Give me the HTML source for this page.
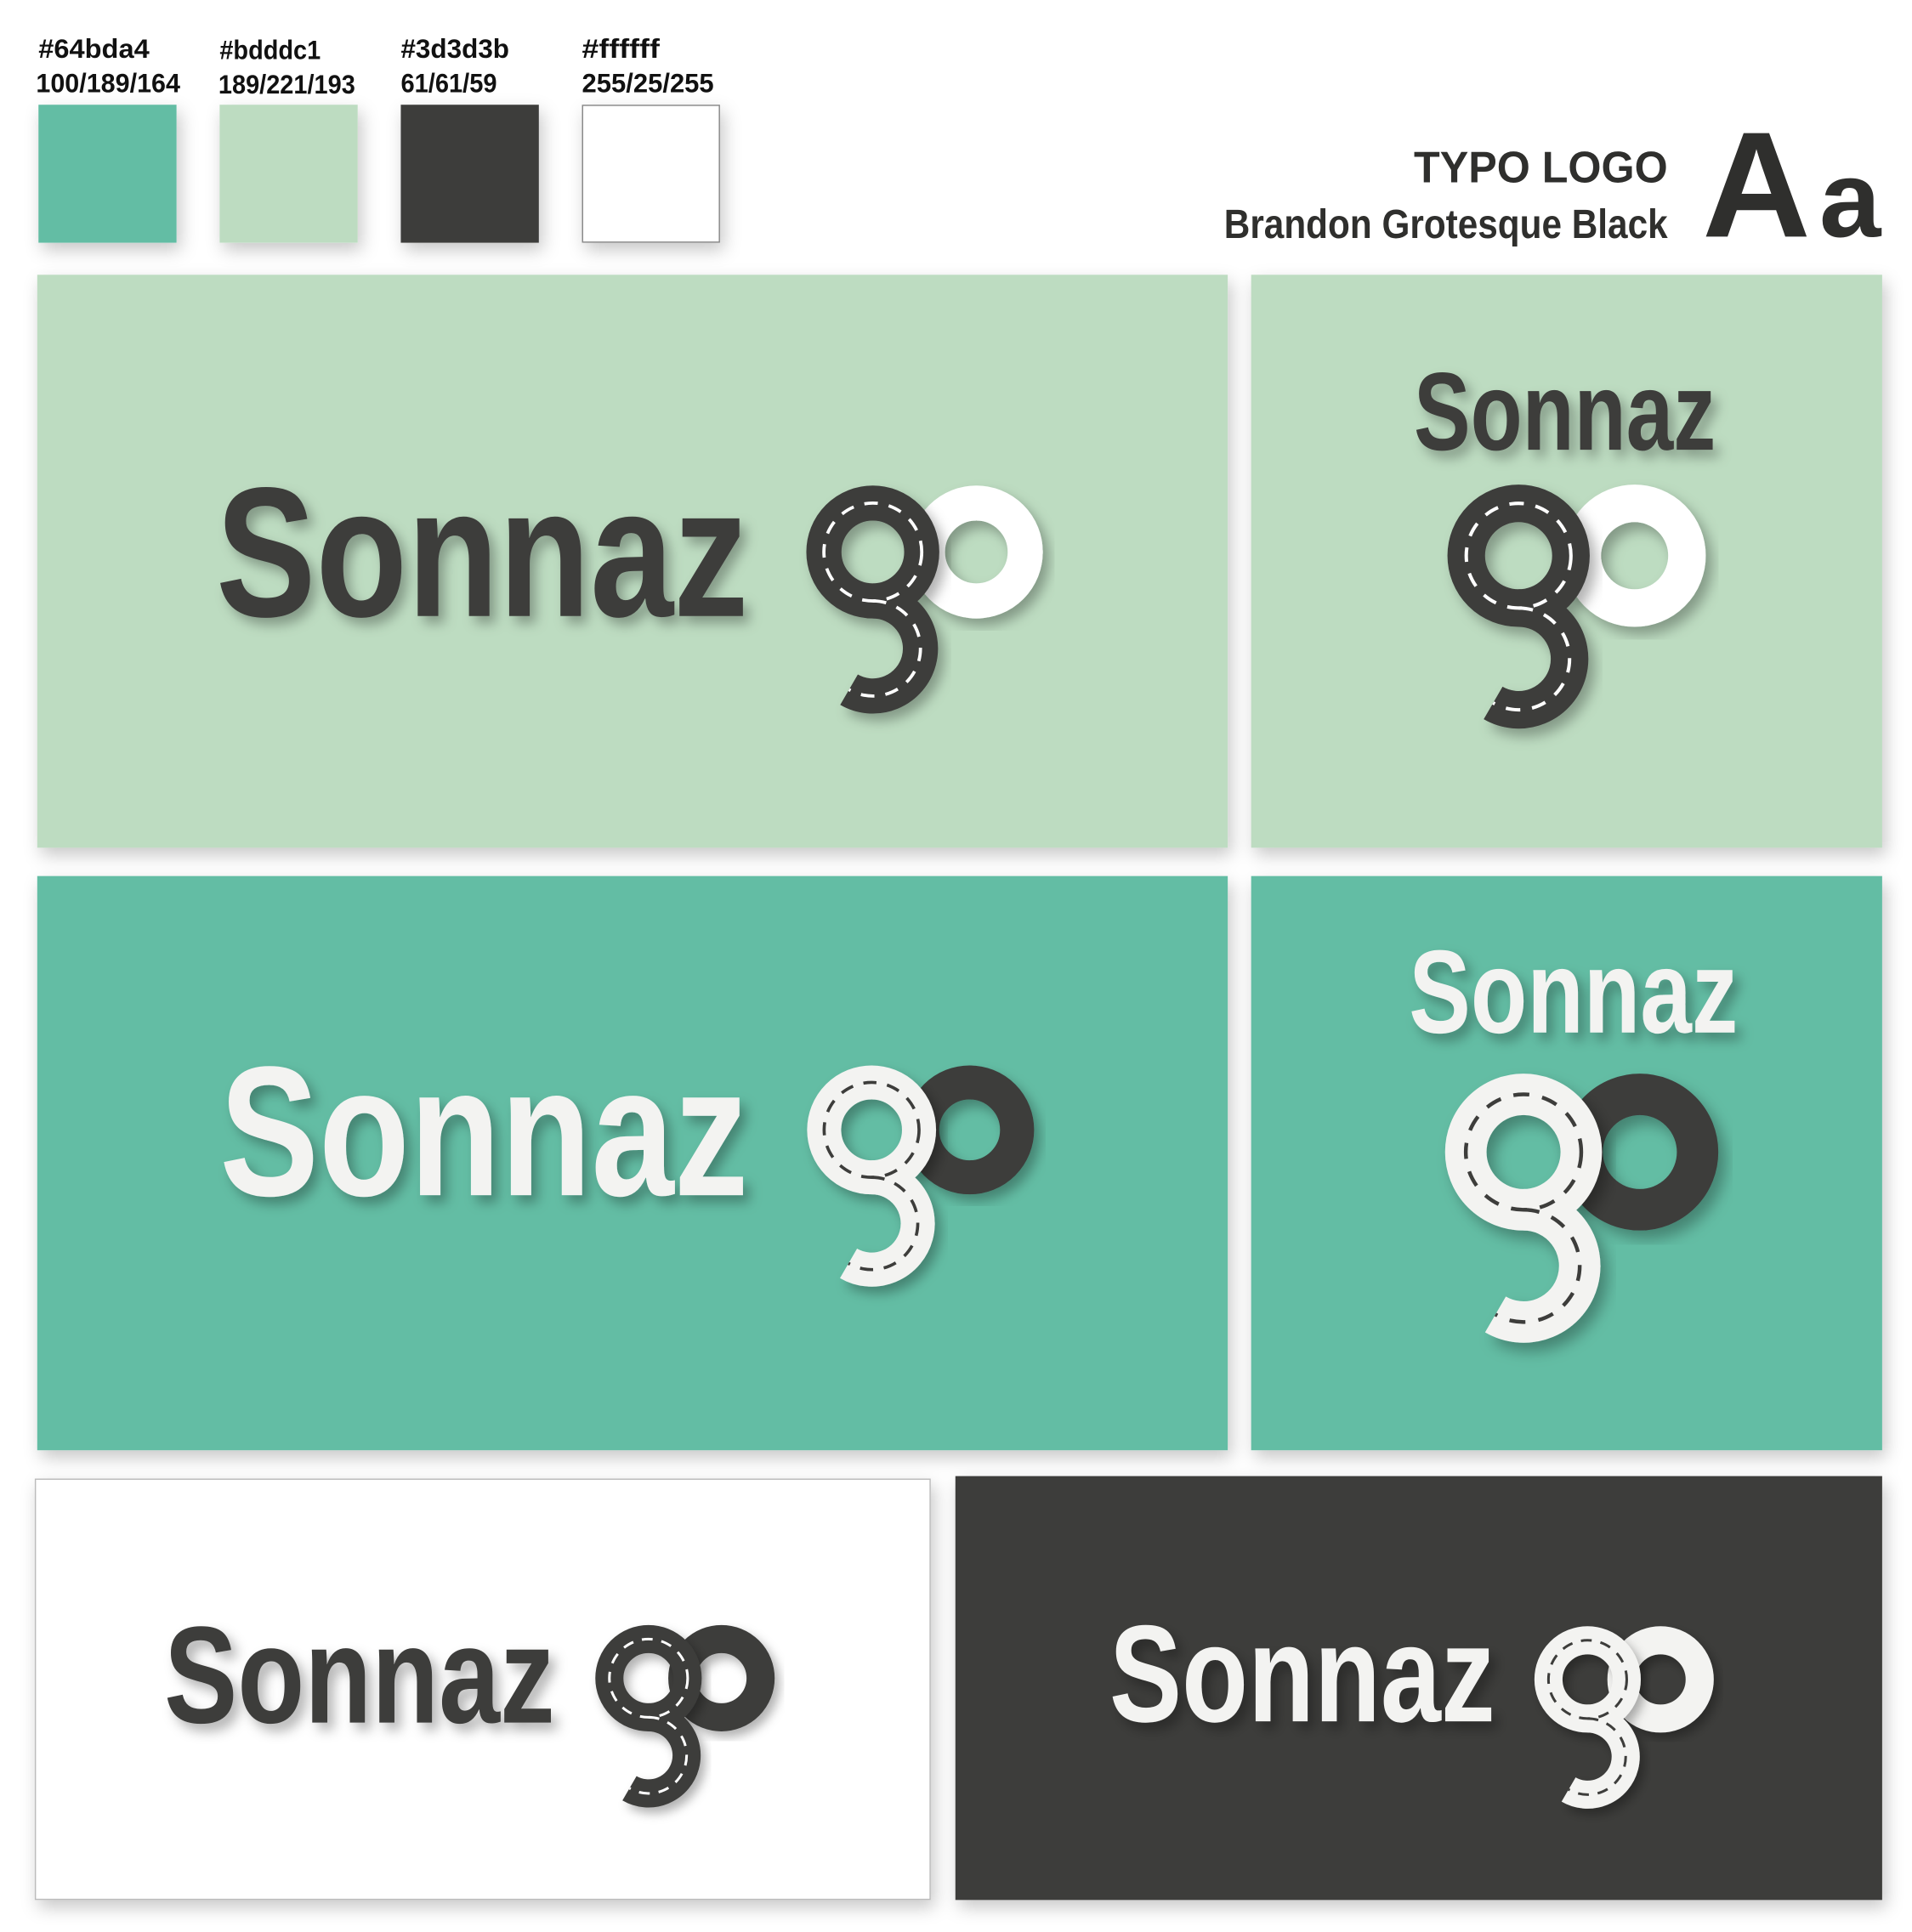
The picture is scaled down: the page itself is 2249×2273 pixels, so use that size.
<!DOCTYPE html>
<html><head><meta charset="utf-8"><style>
html,body{margin:0;padding:0;background:#fff;}
svg{display:block}
text{font-family:"Liberation Sans",sans-serif;font-weight:bold}
</style></head><body>
<svg width="2249" height="2273" viewBox="0 0 1551 1568" xmlns="http://www.w3.org/2000/svg">
<defs>
<filter id="ps" x="-10%" y="-10%" width="130%" height="130%"><feDropShadow dx="3" dy="6" stdDeviation="7" flood-color="#000" flood-opacity="0.22"/></filter>
<filter id="ls" x="-30%" y="-30%" width="160%" height="160%"><feDropShadow dx="5" dy="6" stdDeviation="5" flood-color="#000" flood-opacity="0.3"/></filter>
</defs>
<rect width="1551" height="1568" fill="#fff"/>

<g fill="#111" font-size="22">
<text x="31" y="47" textLength="90" lengthAdjust="spacingAndGlyphs">#64bda4</text>
<text x="29" y="75" textLength="117" lengthAdjust="spacingAndGlyphs">100/189/164</text>
<text x="178" y="48" textLength="82" lengthAdjust="spacingAndGlyphs">#bdddc1</text>
<text x="177" y="76" textLength="111" lengthAdjust="spacingAndGlyphs">189/221/193</text>
<text x="325" y="47" textLength="88" lengthAdjust="spacingAndGlyphs">#3d3d3b</text>
<text x="325" y="75" textLength="78" lengthAdjust="spacingAndGlyphs">61/61/59</text>
<text x="472" y="47" textLength="63" lengthAdjust="spacingAndGlyphs">#ffffff</text>
<text x="472" y="75" textLength="107" lengthAdjust="spacingAndGlyphs">255/25/255</text>
</g>
<g filter="url(#ps)">
<rect x="31" y="85" width="112" height="112" fill="#64bda4"/>
<rect x="178" y="85" width="112" height="112" fill="#bddcc1"/>
<rect x="325" y="85" width="112" height="112" fill="#3d3d3b"/>
<rect x="472.5" y="85.5" width="111" height="111" fill="#fff" stroke="#888" stroke-width="1"/>
</g>

<g fill="#2f2f2d">
<text x="1353" y="148" font-size="36" text-anchor="end" textLength="206" lengthAdjust="spacingAndGlyphs">TYPO LOGO</text>
<text x="1353" y="193" font-size="33" text-anchor="end" textLength="360" lengthAdjust="spacingAndGlyphs">Brandon Grotesque Black</text>
<text x="1381" y="192" font-size="122" textLength="88" lengthAdjust="spacingAndGlyphs">A</text>
<text x="1476" y="192" font-size="88" textLength="50" lengthAdjust="spacingAndGlyphs">a</text>
</g>

<g filter="url(#ps)">
<rect x="30" y="223" width="966" height="465" fill="#bddcc1"/>
<rect x="1015" y="223" width="512" height="465" fill="#bddcc1"/>
<rect x="30" y="711" width="966" height="466" fill="#64bda4"/>
<rect x="1015" y="711" width="512" height="466" fill="#64bda4"/>
<rect x="28.5" y="1200.5" width="726" height="341" fill="#fff" stroke="#bbb" stroke-width="1"/>
<rect x="775" y="1198" width="752" height="344" fill="#3d3d3b"/>
</g>

<g filter="url(#ls)">
<text x="175" y="500" font-size="150" fill="#3d3d3b" textLength="432" lengthAdjust="spacingAndGlyphs">Sonnaz</text>
<text x="1147" y="365" font-size="90" fill="#3d3d3b" textLength="245" lengthAdjust="spacingAndGlyphs">Sonnaz</text>
<text x="178" y="970" font-size="150" fill="#f3f3f1" textLength="429" lengthAdjust="spacingAndGlyphs">Sonnaz</text>
<text x="1143" y="838" font-size="96" fill="#f3f3f1" textLength="267" lengthAdjust="spacingAndGlyphs">Sonnaz</text>
<text x="133" y="1398" font-size="112" fill="#3d3d3b" textLength="317" lengthAdjust="spacingAndGlyphs">Sonnaz</text>
<text x="900" y="1397" font-size="112" fill="#f3f3f1" textLength="313" lengthAdjust="spacingAndGlyphs">Sonnaz</text>
</g>

<g transform="translate(708,448)" fill="none">
<circle cx="84" cy="0" r="39.7" stroke="#fff" stroke-width="28.5" filter="url(#ls)"/>
<g filter="url(#ls)">
<circle r="39.7" stroke="#3d3d3b" stroke-width="28.5"/>
<path d="M0,39.7 A38.6,38.6 0 1 1 -19.3,111.7" stroke="#3d3d3b" stroke-width="28.5"/>
</g>
<circle r="39.7" stroke="#fff" stroke-width="2.6" stroke-dasharray="11 9"/>
<path d="M0,39.7 A38.6,38.6 0 1 1 -19.3,111.7" stroke="#fff" stroke-width="2.6" stroke-dasharray="11 9"/>
</g>
<g transform="translate(1232,451) scale(1.07)" fill="none">
<circle cx="88" cy="0" r="39.7" stroke="#fff" stroke-width="28.5" filter="url(#ls)"/>
<g filter="url(#ls)">
<circle r="39.7" stroke="#3d3d3b" stroke-width="28.5"/>
<path d="M0,39.7 A38.6,38.6 0 1 1 -19.3,111.7" stroke="#3d3d3b" stroke-width="28.5"/>
</g>
<circle r="39.7" stroke="#fff" stroke-width="2.6" stroke-dasharray="11 9"/>
<path d="M0,39.7 A38.6,38.6 0 1 1 -19.3,111.7" stroke="#fff" stroke-width="2.6" stroke-dasharray="11 9"/>
</g>
<g transform="translate(707,917) scale(0.97)" fill="none">
<circle cx="82" cy="0" r="39.7" stroke="#3d3d3b" stroke-width="28.5" filter="url(#ls)"/>
<g filter="url(#ls)">
<circle r="39.7" stroke="#f3f3f1" stroke-width="28.5"/>
<path d="M0,39.7 A38.6,38.6 0 1 1 -19.3,111.7" stroke="#f3f3f1" stroke-width="28.5"/>
</g>
<circle r="39.7" stroke="#3d3d3b" stroke-width="2.6" stroke-dasharray="11 9"/>
<path d="M0,39.7 A38.6,38.6 0 1 1 -19.3,111.7" stroke="#3d3d3b" stroke-width="2.6" stroke-dasharray="11 9"/>
</g>
<g transform="translate(1236,935) scale(1.18)" fill="none">
<circle cx="80" cy="0" r="39.7" stroke="#3d3d3b" stroke-width="28.5" filter="url(#ls)"/>
<g filter="url(#ls)">
<circle r="39.7" stroke="#f3f3f1" stroke-width="28.5"/>
<path d="M0,39.7 A38.6,38.6 0 1 1 -19.3,111.7" stroke="#f3f3f1" stroke-width="28.5"/>
</g>
<circle r="39.7" stroke="#3d3d3b" stroke-width="2.6" stroke-dasharray="11 9"/>
<path d="M0,39.7 A38.6,38.6 0 1 1 -19.3,111.7" stroke="#3d3d3b" stroke-width="2.6" stroke-dasharray="11 9"/>
</g>
<g transform="translate(526,1362) scale(0.8)" fill="none">
<circle cx="74" cy="0" r="39.7" stroke="#3d3d3b" stroke-width="28.5" filter="url(#ls)"/>
<g filter="url(#ls)">
<circle r="39.7" stroke="#3d3d3b" stroke-width="28.5"/>
<path d="M0,39.7 A38.6,38.6 0 1 1 -19.3,111.7" stroke="#3d3d3b" stroke-width="28.5"/>
</g>
<circle r="39.7" stroke="#fff" stroke-width="2.6" stroke-dasharray="11 9"/>
<path d="M0,39.7 A38.6,38.6 0 1 1 -19.3,111.7" stroke="#fff" stroke-width="2.6" stroke-dasharray="11 9"/>
</g>
<g transform="translate(1288,1363) scale(0.8)" fill="none">
<circle cx="74" cy="0" r="39.7" stroke="#f3f3f1" stroke-width="28.5" filter="url(#ls)"/>
<g filter="url(#ls)">
<circle r="39.7" stroke="#f3f3f1" stroke-width="28.5"/>
<path d="M0,39.7 A38.6,38.6 0 1 1 -19.3,111.7" stroke="#f3f3f1" stroke-width="28.5"/>
</g>
<circle r="39.7" stroke="#3d3d3b" stroke-width="2.6" stroke-dasharray="11 9"/>
<path d="M0,39.7 A38.6,38.6 0 1 1 -19.3,111.7" stroke="#3d3d3b" stroke-width="2.6" stroke-dasharray="11 9"/>
</g>
</svg>
</body></html>
